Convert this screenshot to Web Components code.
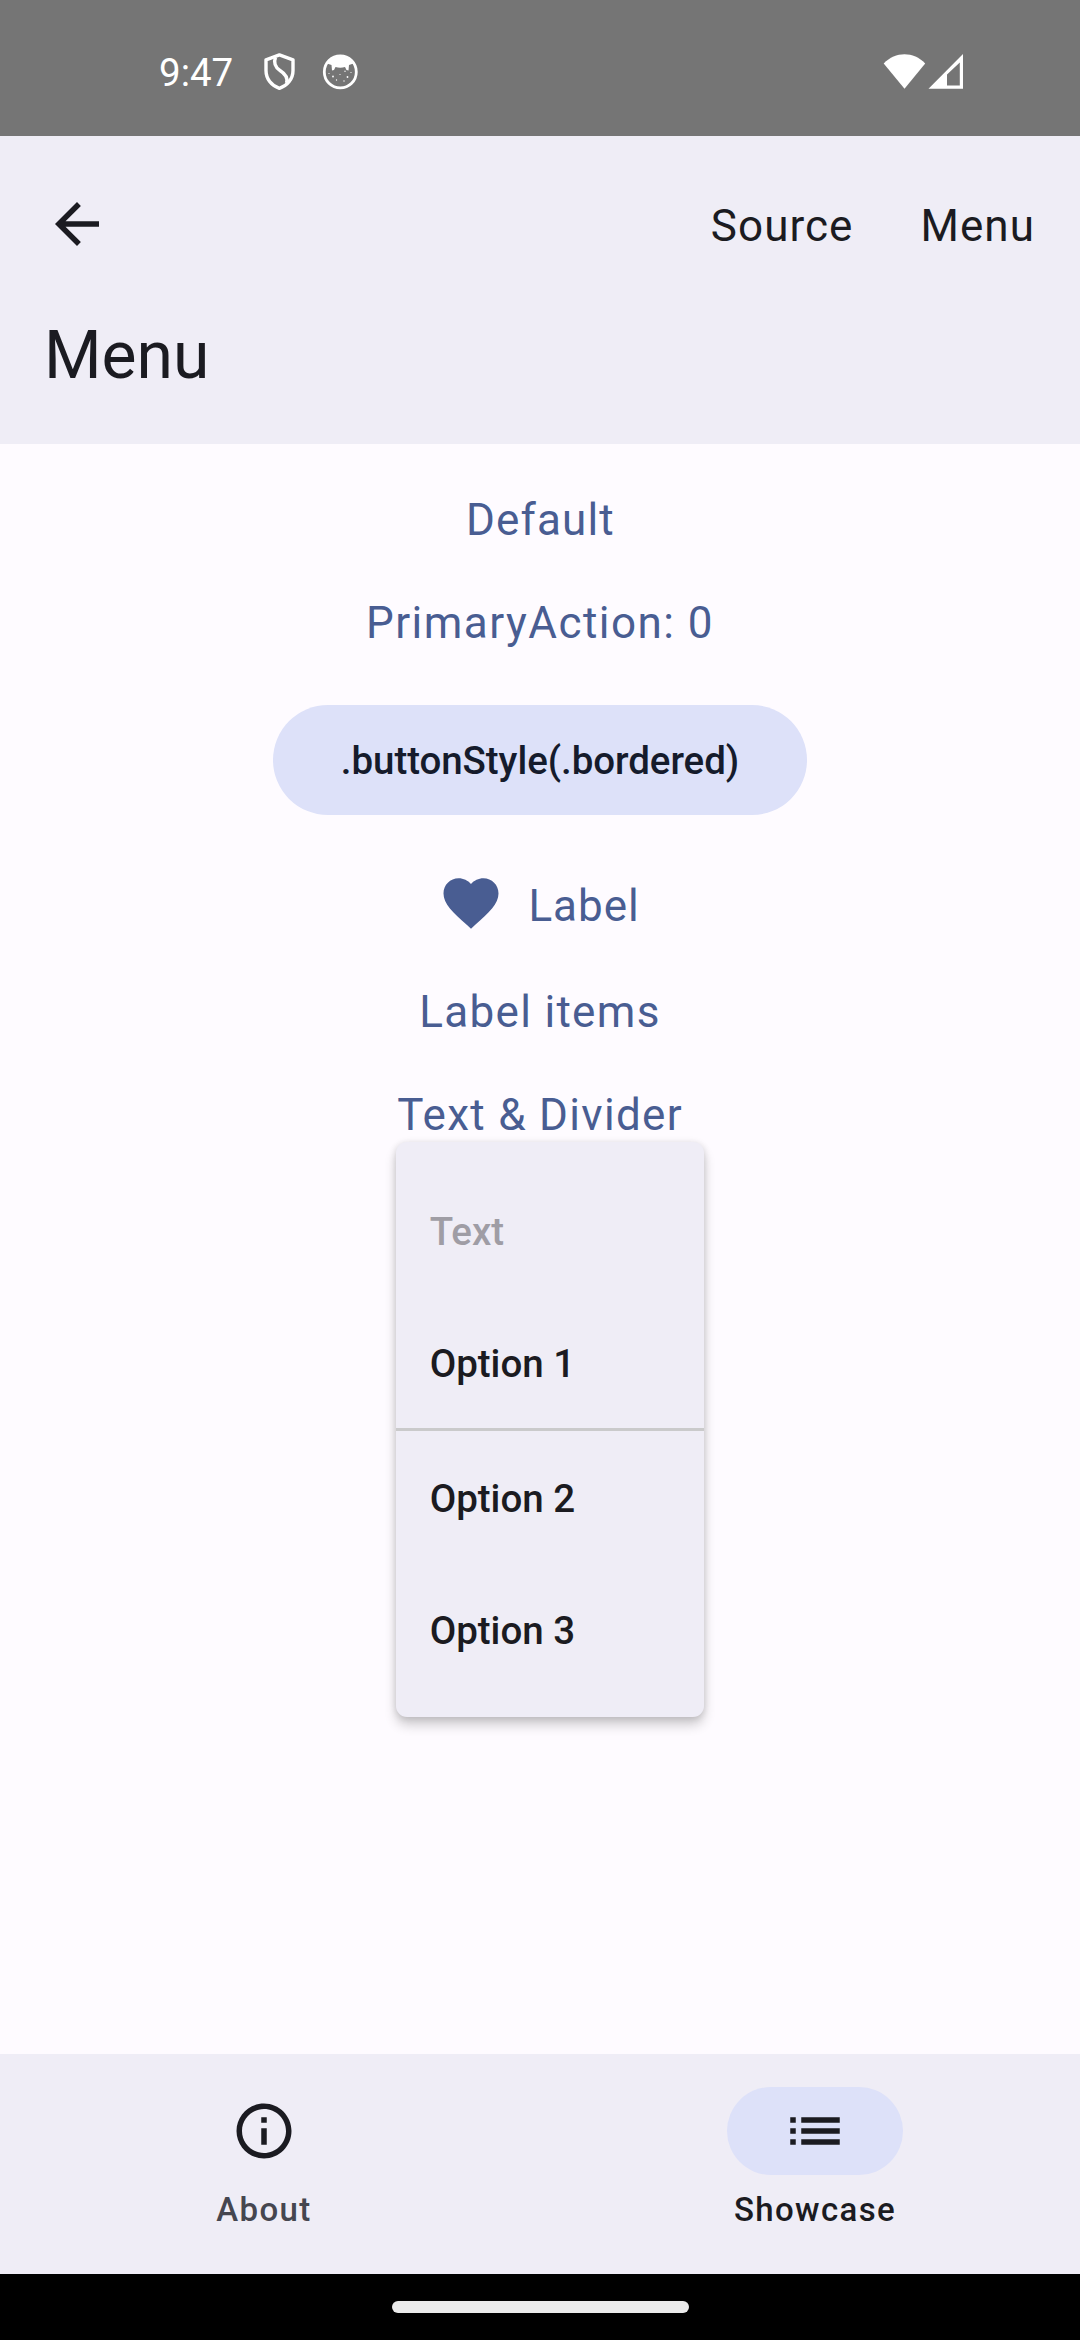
<!DOCTYPE html>
<html lang="en">
<head>
<meta charset="utf-8">
<title>Menu</title>
<style>
html,body{margin:0;padding:0}
body{width:1080px;height:2340px;overflow:hidden;font-family:Roboto,sans-serif;
--surface:#efedf6;--ink:#1b1b21;--primary:#495d92;--tint:#dde1f9}
</style>
</head>
<body>
<app-screen></app-screen>
<script>
const define=(name,html)=>customElements.define(name,class extends HTMLElement{
  constructor(){super();this.attachShadow({mode:'open'}).innerHTML=html;}
});

define('status-bar',`<style>
:host{display:flex;box-sizing:border-box;height:136px;padding:7px 117px 0 158px;align-items:center;justify-content:space-between;background:#757575;color:#fff}
div{display:flex;align-items:center}
.time{box-sizing:border-box;font-size:38.5px;line-height:46px;width:105px;padding:2px 0 0 1px}
svg{display:block}
</style>
<div><span class="time">9:47</span>
<svg width="33" height="40" viewBox="263 52 33 40" fill="none" stroke="#fff" stroke-width="3.4" stroke-linejoin="round"><path d="M279.4 54.9 266 59.8V70.500C266 78.800 271.300 85.600 279.400 88.300 287.500 85.600 293 78.800 293 70.500V59.800Z"/><path d="M275.500 57.500C273.500 62 275 67.500 280 70.500 285.500 74 288 78.500 286.500 83"/></svg>
<svg style="margin-left:25px" width="38" height="38" viewBox="321 52.500 38 38"><circle cx="340.300" cy="71.400" r="16" fill="none" stroke="#fff" stroke-width="2.800"/><path d="M327 63C330 58 334.500 55 340.300 55S350.500 58 353.500 63L349 64.500 348.500 70 346.500 69.500 345 66.500C342 67.500 338.500 67.500 335.500 66.500L334 69.500 332 70 331.500 64.500Z" fill="#fff"/><g fill="#fff"><circle cx="333" cy="76" r=".9"/><circle cx="345" cy="70.800" r=".7"/><circle cx="347.500" cy="76.500" r=".9"/><circle cx="340" cy="74" r=".6"/><circle cx="336.500" cy="79.500" r=".7"/><circle cx="344" cy="80.500" r=".7"/><circle cx="329" cy="73" r=".6"/><circle cx="351" cy="72" r=".6"/></g></svg></div>
<svg width="80" height="38" viewBox="882 52 80 38"><path d="M903.500 87.700 882.700 62.500C894.500 50.300 912.500 50.300 924.200 62.500Z" fill="#fff"/><path fill-rule="evenodd" d="M927.500 87.800 962 53V87.800ZM946 73.500V84.500H958.800V61.500Z" fill="#fff"/></svg>`);

define('top-bar',`<style>
:host{display:flex;flex-direction:column;box-sizing:border-box;height:308px;background:var(--surface);color:var(--ink);padding:55px 45px 0 44px}
.row{display:flex;align-items:center;height:66px}
svg{display:block;margin-right:auto}
.act{font-size:44px;line-height:66px;letter-spacing:1.05px;margin:4px 0 0 67px}
h1{margin:55px 0 0;font-size:66px;font-weight:400;line-height:88px}
</style>
<div class="row"><svg width="66" height="66" viewBox="0 0 24 24" fill="#1b1b21"><path d="M20 11H7.830l5.590-5.590L12 4l-8 8 8 8 1.410-1.410L7.830 13H20v-2z"/></svg>
<span class="act">Source</span><span class="act">Menu</span></div><h1><slot></slot></h1>`);

define('text-button',`<style>
:host{display:flex;align-items:flex-start;gap:24px;color:var(--primary);font-size:44px;line-height:66px;letter-spacing:1.3px;white-space:nowrap}
</style><slot name="icon"></slot><slot></slot>`);

define('tonal-button',`<style>
:host{display:flex;align-items:center;justify-content:center;box-sizing:border-box;width:534px;height:110px;border-radius:55px;background:var(--tint);color:#151b2c;font-size:38.5px;font-weight:500;line-height:55px;letter-spacing:-.06px;white-space:nowrap}
</style><slot></slot>`);

define('heart-icon',`<style>:host{display:block;width:66px;height:66px}svg{display:block}</style>
<svg width="66" height="66" viewBox="0 0 24 24" fill="#495d92"><path d="M12 21.350l-1.450-1.320C5.400 15.360 2 12.280 2 8.500 2 5.420 4.420 3 7.500 3c1.740 0 3.410.81 4.500 2.090C13.090 3.810 14.760 3 16.500 3 19.580 3 22 5.420 22 8.500c0 3.780-3.400 6.860-8.550 11.540L12 21.350z"/></svg>`);

define('menu-item',`<style>
:host{display:flex;align-items:center;height:132px;padding:2px 33.5px 0;box-sizing:border-box;font-size:38.5px;font-weight:500;line-height:55px;color:var(--ink)}
:host([disabled]){color:#9f9da5}
</style><slot></slot>`);

define('menu-divider',`<style>:host{display:block;height:3px;background:#cacacb}</style>`);

define('drop-menu',`<style>
:host{display:block;box-sizing:border-box;width:308px;padding:22px 0;border-radius:11px;background:var(--surface);box-shadow:0 8px 12px rgba(0,0,0,.19),0 1px 7px rgba(0,0,0,.13)}
</style><slot></slot>`);

define('nav-tab',`<style>
:host{display:flex;flex:0 0 528px;flex-direction:column;align-items:center;box-sizing:border-box;padding-top:33px;color:#45464f;font-size:33px;font-weight:500;line-height:44px;letter-spacing:1.375px}
:host([selected]){color:var(--ink)}
.pill{display:flex;align-items:center;justify-content:center;width:176px;height:88px;border-radius:44px;margin-bottom:13px}
:host([selected]) .pill{background:var(--tint)}
</style><div class="pill"><slot name="icon"></slot></div><span><slot></slot></span>`);

define('bottom-nav',`<style>
:host{display:flex;box-sizing:border-box;height:220px;gap:23px;background:var(--surface)}
svg{display:block}
</style>
<nav-tab><svg slot="icon" width="66" height="66" viewBox="0 0 24 24" fill="#1b1b21"><path d="M11 7h2v2h-2zm0 4h2v6h-2zm1-9C6.480 2 2 6.480 2 12s4.480 10 10 10 10-4.480 10-10S17.520 2 12 2zm0 18c-4.410 0-8-3.590-8-8s3.590-8 8-8 8 3.590 8 8-3.590 8-8 8z"/></svg>About</nav-tab>
<nav-tab selected><svg slot="icon" width="66" height="66" viewBox="0 0 24 24" fill="#1b1b21"><path d="M3 13h2v-2H3v2zm0 4h2v-2H3v2zm0-8h2V7H3v2zm4 4h14v-2H7v2zm0 4h14v-2H7v2zM7 7v2h14V7H7z"/></svg>Showcase</nav-tab>`);

define('gesture-bar',`<style>
:host{display:flex;box-sizing:border-box;height:66px;padding-top:27px;justify-content:center;align-items:flex-start;background:#000}
i{width:297px;height:12px;border-radius:6px;background:#ebebeb}
</style><i></i>`);

define('app-screen',`<style>
:host{display:flex;flex-direction:column;width:1080px;height:2340px;background:#fefbff}
main{flex:1;display:flex;flex-direction:column;align-items:center;padding-top:43px}
.anchor{position:relative}
drop-menu{position:absolute;left:-1px;top:60px}
</style>
<status-bar></status-bar>
<top-bar>Menu</top-bar>
<main>
<text-button style="letter-spacing:1.15px;padding-left:1px">Default</text-button>
<text-button style="margin-top:37px;letter-spacing:1.475px">PrimaryAction: 0</text-button>
<tonal-button style="margin-top:49px">.buttonStyle(.bordered)</tonal-button>
<text-button style="margin-top:55px;padding-right:2px;letter-spacing:.95px"><heart-icon slot="icon"></heart-icon><span style="padding-top:3px">Label</span></text-button>
<text-button style="margin-top:40px">Label items</text-button>
<div class="anchor" style="margin-top:37px"><text-button>Text &amp; Divider</text-button>
<drop-menu><menu-item disabled>Text</menu-item><menu-item>Option 1</menu-item><menu-divider></menu-divider><menu-item>Option 2</menu-item><menu-item>Option 3</menu-item></drop-menu></div>
</main>
<bottom-nav></bottom-nav>
<gesture-bar></gesture-bar>`);
</script>
</body>
</html>
